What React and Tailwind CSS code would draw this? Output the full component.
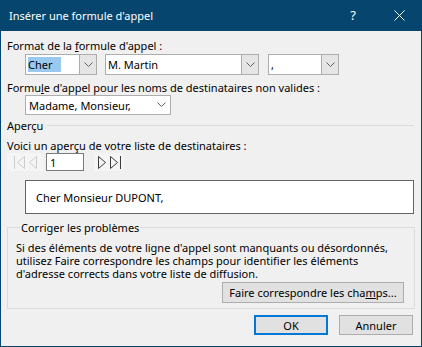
const font = { fontFamily: '"Noto Sans", "Open Sans", sans-serif' };

function Chevron() {
  return (
    <svg width="9" height="6" viewBox="0 0 9 6" className="block">
      <path d="M0.5 0.5 L4.5 4.5 L8.5 0.5" fill="none" stroke="#606060" strokeWidth="1" />
    </svg>
  );
}

function Combo({ width, value, selected }) {
  return (
    <div className={`flex h-[21px] border border-[#adadad] bg-white ${width}`}>
      <div className="flex flex-1 items-center pl-[2px] overflow-hidden">
        <span className={selected ? 'bg-[#99c9ef] pr-[8px] leading-[15px]' : 'leading-[15px]'}>{value}</span>
      </div>
      <div className="flex w-[17px] items-center justify-center border-l border-[#adadad] bg-[#e5e5e5]">
        <Chevron />
      </div>
    </div>
  );
}

function NavIcon({ kind, color }) {
  const paths = {
    first: 'M1.5 1 V14 M11.5 1.5 L4.5 7.5 L11.5 13.5 Z',
    prev: 'M8.5 1.5 L1.5 7.5 L8.5 13.5 Z',
    next: 'M1.5 1.5 L8.5 7.5 L1.5 13.5 Z',
    last: 'M1.5 1.5 L8.5 7.5 L1.5 13.5 Z M11.5 1 V14',
  };
  const w = kind === 'first' || kind === 'last' ? 13 : 10;
  return (
    <svg width={w} height="15" viewBox={`0 0 ${w} 15`} className="block">
      <path d={paths[kind]} fill="none" stroke={color} strokeWidth="1" />
    </svg>
  );
}

export default function App() {
  return (
    <div className="w-[422px] h-[347px] bg-[#06466e] flex flex-col text-[11px] text-black" style={font}>
      {/* barre de titre */}
      <div className="h-[31px] flex items-center text-white pl-[9px] shrink-0 text-[11px]">
        <span className="flex-1 leading-[15px]">Insérer une formule d'appel</span>
        <span className="w-[46px] text-center text-[13px]">?</span>
        <div className="w-[46px] flex justify-center">
          <svg width="11" height="11" viewBox="0 0 11 11">
            <path d="M0.5 0.5 L10.5 10.5 M10.5 0.5 L0.5 10.5" stroke="white" strokeWidth="1" />
          </svg>
        </div>
      </div>

      <div className="flex-1 mx-[1px] mb-[1px] bg-[#f0f0f0] px-[6px] flex flex-col leading-[15px]">
        <div className="mt-[7px]">
          Format de la <span className="underline">f</span>ormule d'appel :
        </div>
        <div className="mt-[1px] ml-[18px] flex">
          <Combo width="w-[72px]" value="Cher" selected />
          <div className="ml-[8px]"><Combo width="w-[154px]" value="M. Martin" /></div>
          <div className="ml-[9px]"><Combo width="w-[71px]" value="," /></div>
        </div>

        <div className="mt-[5px]">
          Formu<span className="underline">l</span>e d'appel pour les noms de destinataires non valides :
        </div>
        <div className="ml-[18px] w-[146px] h-[20px] border border-[#adadad] bg-white flex items-center">
          <span className="flex-1 pl-[3px]">Madame, Monsieur,</span>
          <div className="w-[17px] h-full flex items-center justify-center"><Chevron /></div>
        </div>

        <div className="mt-[3px] flex items-center">
          <span>Aperçu</span>
          <div className="flex-1 h-px bg-[#dcdcdc] ml-[4px] mr-[1px]" />
        </div>
        <div className="mt-[5px]">Voici un aperçu de votre liste de destinataires :</div>
        <div className="flex items-center h-[18px]">
          <div className="w-[36px] h-[18px] bg-[#f5f5f5] flex items-center justify-center gap-[2px]">
            <NavIcon kind="first" color="#cccccc" />
            <NavIcon kind="prev" color="#cccccc" />
          </div>
          <div className="ml-[3px] w-[38px] h-[18px] border border-[#7a7a7a] bg-white flex items-center pl-[3px]">1</div>
          <div className="ml-[10px] w-[30px] h-[18px] bg-[#f5f5f5] flex items-center justify-center gap-[2px]">
            <NavIcon kind="next" color="#3c3c3c" />
            <NavIcon kind="last" color="#3c3c3c" />
          </div>
        </div>
        <div className="mt-[9px] ml-[18px] mr-[1px] h-[34px] border border-[#646464] bg-white flex items-center pl-[10px]">
          Cher Monsieur DUPONT,
        </div>

        <fieldset className="mt-[6px] border border-[#dcdcdc] px-[8px] pb-[5px]">
          <legend className="ml-[4px] px-[1px] leading-[15px]">Corriger les problèmes</legend>
          <p className="mt-[6px] leading-[13px]">
            Si des éléments de votre ligne d'appel sont manquants ou désordonnés,<br />
            utilisez Faire correspondre les champs pour identifier les éléments<br />
            d'adresse corrects dans votre liste de diffusion.
          </p>
          <div className="mt-[2px] flex justify-end pr-[2px]">
            <button className="w-[182px] h-[21px] border border-[#adadad] bg-[#e1e1e1] whitespace-nowrap">
              Faire correspondre les cha<span className="underline">m</span>ps...
            </button>
          </div>
        </fieldset>

        <div className="mt-[6px] flex justify-end gap-[11px] pr-[2px]">
          <button className="w-[74px] h-[20px] border-2 border-[#0078d7] bg-[#e1e1e1]">OK</button>
          <button className="w-[74px] h-[20px] border border-[#adadad] bg-[#e1e1e1]">Annuler</button>
        </div>
      </div>
    </div>
  );
}
